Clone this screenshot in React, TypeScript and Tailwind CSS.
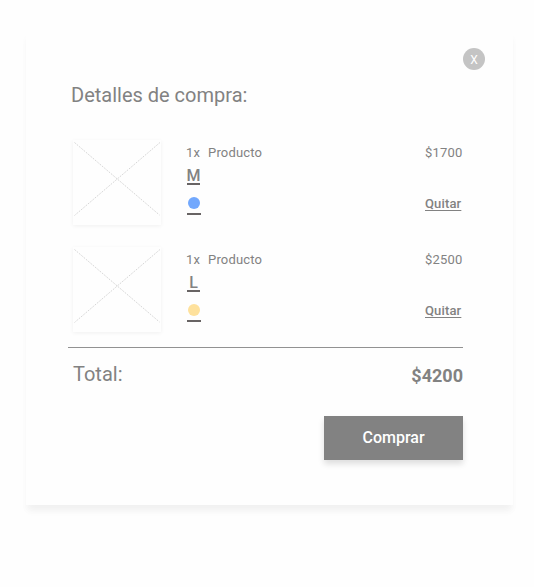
type Item = {
  quantity: number;
  name: string;
  size: string;
  colorClass: string;
  price: number;
};

const items: Item[] = [
  { quantity: 1, name: "Producto", size: "M", colorClass: "bg-[#72a8fd]", price: 1700 },
  { quantity: 1, name: "Producto", size: "L", colorClass: "bg-[#fee19c]", price: 2500 },
];

function Placeholder() {
  return (
    <div className="h-[85px] w-[88px] bg-[#fefefe] shadow-[0_1px_4px_rgba(0,0,0,0.06)]">
      <svg viewBox="0 0 88 85" className="h-full w-full" fill="none" stroke="#cccccc" strokeWidth="0.8" strokeDasharray="1.8 1.2">
        <path d="M1.5 2.5 L86.5 75" />
        <path d="M87 2.5 L1.5 75.5" />
      </svg>
    </div>
  );
}

function CartItem({ item }: { item: Item }) {
  return (
    <li className="flex h-[107px] items-start">
      <Placeholder />
      <div className="ml-[25px] flex flex-col items-start pt-[5px]">
        <p className="flex gap-[8px] text-[13px] leading-4 tracking-[0.18px]">
          <span className="w-[14px]">{item.quantity}x</span>
          <span>{item.name}</span>
        </p>
        <span className="mt-[5px] ml-px h-[19px] w-[13px] border-b-2 border-[#686464] text-center text-base leading-[19px] font-medium">
          <span className="-mx-1 block">{item.size}</span>
        </span>
        <span className="mt-[11.5px] ml-px flex h-[18.5px] w-[14px] justify-center border-b-2 border-[#686464]">
          <span className={`size-[12.5px] shrink-0 rounded-full ${item.colorClass}`} />
        </span>
      </div>
      <div className="ml-auto flex w-[38px] flex-col items-start pt-[5px] text-[13px] leading-4">
        <span className="tracking-[0.2px]">${item.price}</span>
        <button className="mt-[35px] font-medium tracking-[0.15px] underline decoration-1 underline-offset-2">Quitar</button>
      </div>
    </li>
  );
}

export default function App() {
  return (
    <main className="h-[587px] w-[534px] bg-[#fefefe] px-[26px] pt-[31px] font-['Roboto','Liberation_Sans',sans-serif] text-[#828282]">
      <section className="flex h-[474px] w-[487px] flex-col bg-[#fefefe] pt-[17px] pr-[50px] pl-[42px] shadow-[0_8px_8px_-2px_rgba(0,0,0,0.035),0_6px_6px_rgba(0,0,0,0.025)]">
        <button className="-mr-[22px] flex size-[22px] shrink-0 items-center justify-center self-end rounded-full bg-[#c4c4c4] pt-px text-xs leading-none text-white">
          X
        </button>
        <h1 className="mt-[13px] pl-[3px] text-xl leading-6">Detalles de compra:</h1>
        <ul className="mt-[33px] h-[207px] pl-[5px]">
          {items.map((item) => (
            <CartItem key={item.size} item={item} />
          ))}
        </ul>
        <div className="flex h-[69px] justify-between border-t border-[#929292] pl-[5px]">
          <span className="pt-[14px] text-xl leading-6">Total:</span>
          <strong className="pt-[16px] text-lg leading-6 font-bold">$4200</strong>
        </div>
        <button className="h-[44px] w-[139px] shrink-0 self-end bg-[#828282] text-base font-medium text-white shadow-[0_4px_6px_rgba(0,0,0,0.13)]">
          Comprar
        </button>
      </section>
    </main>
  );
}
